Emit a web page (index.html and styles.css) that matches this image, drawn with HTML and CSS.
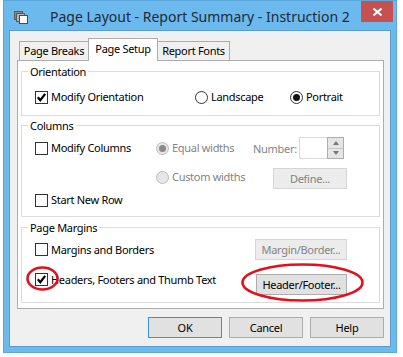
FILE: index.html
```html
<!DOCTYPE html>
<html>
<head>
<meta charset="utf-8">
<title>Page Layout</title>
<link rel="stylesheet" href="styles.css">
</head>
<body>
<div class="window">
  <div class="titlebar">
    <svg class="app-icon" viewBox="0 0 14 13" width="14" height="13">
      <rect x="0.5" y="0.5" width="8" height="8" fill="#8a8a8a" stroke="#5a5a5a"/>
      <rect x="2.5" y="2.5" width="8" height="8" fill="#b5b5b5" stroke="#5a5a5a"/>
      <rect x="5.5" y="4.5" width="8" height="8" fill="#ffffff" stroke="#4a4a4a"/>
    </svg>
    <div class="title">Page Layout - Report Summary - Instruction 2</div>
    <div class="close">
      <svg viewBox="0 0 9 8" width="9" height="8"><path d="M0.5 0.5 L8.5 7.5 M8.5 0.5 L0.5 7.5" stroke="#fff" stroke-width="2" fill="none"/></svg>
    </div>
  </div>
  <div class="client">
    <div class="tabs">
      <div class="tab tab-breaks">Page Breaks</div>
      <div class="tab tab-setup active">Page Setup</div>
      <div class="tab tab-fonts">Report Fonts</div>
    </div>
    <div class="panel">
      <div class="group g-orient">
        <div class="group-title">Orientation</div>
        <div class="row row-orient">
          <div class="check w-orient"><span class="box"><svg viewBox="0 0 11 11" width="11" height="11"><path d="M1.8 5.2 L4.3 8.2 L9.2 1.8" stroke="#000" stroke-width="2.2" fill="none"/></svg></span>Modify Orientation</div>
          <div class="radio w-land"><span class="ring"></span>Landscape</div>
          <div class="radio"><span class="ring on"><span class="dot"></span></span>Portrait</div>
        </div>
      </div>
      <div class="group g-cols">
        <div class="group-title">Columns</div>
        <div class="row row-c1">
          <div class="check w-col"><span class="box"></span>Modify Columns</div>
          <div class="radio disabled w-equal"><span class="ring on"><span class="dot"></span></span>Equal widths</div>
          <div class="label-dis w-num">Number:</div>
          <div class="spin">
            <div class="spin-field"></div>
            <div class="spin-btns">
              <div class="spin-btn"><span class="arr up"></span></div>
              <div class="spin-btn"><span class="arr down"></span></div>
            </div>
          </div>
        </div>
        <div class="row row-c2">
          <div class="radio disabled custom"><span class="ring"></span>Custom widths</div>
          <div class="btn btn-dis btn-define">Define...</div>
        </div>
        <div class="row row-c3">
          <div class="check"><span class="box"></span>Start New Row</div>
        </div>
      </div>
      <div class="group g-margins">
        <div class="group-title">Page Margins</div>
        <div class="row row-m1">
          <div class="check"><span class="box"></span>Margins and Borders</div>
          <div class="btn btn-dis btn-margin">Margin/Border...</div>
        </div>
        <div class="row row-m2">
          <div class="check check-tight"><span class="box"><svg viewBox="0 0 11 11" width="11" height="11"><path d="M1.8 5.2 L4.3 8.2 L9.2 1.8" stroke="#000" stroke-width="2.2" fill="none"/></svg></span>Headers, Footers and Thumb Text</div>
          <div class="btn btn-header">Header/Footer...</div>
        </div>
      </div>
    </div>
    <div class="buttons">
      <div class="btn btn-main btn-default">OK</div>
      <div class="btn btn-main">Cancel</div>
      <div class="btn btn-main">Help</div>
    </div>
  </div>
</div>
<svg class="annot" width="403" height="357" viewBox="0 0 403 357">
  <ellipse cx="42.5" cy="278.5" rx="15" ry="11" fill="none" stroke="#e3101b" stroke-width="2.6"/>
  <ellipse cx="302.5" cy="282.5" rx="60" ry="18" fill="none" stroke="#e3101b" stroke-width="2.6"/>
</svg>
</body>
</html>
```

FILE: styles.css
```css
* { box-sizing: border-box; }
html, body { margin: 0; padding: 0; }
body {
  background: #ffffff;
  width: 403px;
  height: 357px;
  overflow: hidden;
  position: relative;
  font-family: "Noto Sans", sans-serif;
  font-size: 11px;
  letter-spacing: -0.3px;
  color: #000;
}
.window {
  margin-left: 3px;
  width: 394px;
  height: 353px;
  background: #6cb9ee;
  border: 1px solid #5aa6dd;
  padding: 0 6px 6px;
  display: flex;
  flex-direction: column;
}
.titlebar {
  height: 30px;
  margin: 0 -6px;
  padding-left: 10px;
  display: flex;
  align-items: center;
  flex: none;
}
.app-icon { flex: none; display: block; margin-top: 2px; }
.title {
  margin-left: 22px;
  flex: 1;
  font-size: 14px;
  letter-spacing: 0;
  color: #1e2a36;
  white-space: nowrap;
}
.close {
  align-self: flex-start;
  width: 32px;
  height: 21px;
  margin-right: 3px;
  background: #c75050;
  display: flex;
  align-items: center;
  justify-content: center;
}
.close svg { display: block; }
.client {
  flex: 1;
  background: #f0f0f0;
  box-shadow: 0 0 0 1px #5b9bd0;
  padding: 0 6px 8px 7px;
  display: flex;
  flex-direction: column;
}
.tabs {
  height: 29px;
  flex: none;
  display: flex;
  align-items: flex-end;
  padding-left: 2px;
}
.tab {
  height: 19px;
  border: 1px solid #acacac;
  border-bottom: none;
  background: #f0f0f0;
  text-align: center;
  line-height: 17px;
  white-space: nowrap;
}
.tab-breaks { width: 70px; }
.tab-setup { width: 70px; margin-left: -1px; }
.tab-fonts { width: 73px; margin-left: -1px; }
.tab.active {
  height: 23px;
  margin-bottom: -1px;
  background: #ffffff;
  line-height: 19px;
  position: relative;
  z-index: 1;
}
.panel {
  width: 367px;
  height: 249px;
  flex: none;
  background: #fff;
  border: 1px solid #acacac;
  padding: 0 3px;
}
.group {
  border: 1px solid #dcdcdc;
}
.g-orient { margin-top: 10px; padding-bottom: 8px; }
.g-cols { margin-top: 9px; padding-bottom: 6px; }
.g-margins { margin-top: 10px; padding-bottom: 7px; }
.group-title {
  margin: -9px 0 0 6px;
  padding: 0 2px;
  width: max-content;
  background: #fff;
  line-height: 17px;
}
.row {
  display: flex;
  align-items: center;
  padding-left: 13px;
  padding-right: 32px;
}
.row-orient { margin-top: 7px; height: 20px; }
.row-c1 { margin-top: 3px; height: 22px; }
.row-c2 { margin-top: 9px; height: 21px; padding-left: 134px; align-items: flex-start; }
.row-c3 { margin-top: 1px; height: 20px; }
.row-m1 { margin-top: 3px; height: 21px; }
.row-m2 { margin-top: 13px; height: 22px; align-items: flex-start; }
.check, .radio {
  display: flex;
  align-items: center;
  line-height: 16px;
  white-space: nowrap;
}
.check-tight { line-height: 13px; }
.box {
  width: 13px;
  height: 13px;
  flex: none;
  border: 1px solid #333;
  background: #fff;
  margin-right: 3px;
}
.box svg { display: block; }
.ring {
  width: 13px;
  height: 13px;
  flex: none;
  border: 1px solid #333;
  border-radius: 50%;
  background: #fff;
  margin-right: 3px;
  display: flex;
  align-items: center;
  justify-content: center;
}
.dot {
  width: 7px;
  height: 7px;
  border-radius: 50%;
  background: #111;
}
.w-orient { width: 160px; }
.w-land { width: 95px; }
.w-col { width: 121px; }
.w-equal { width: 97px; }
.w-num { width: 46px; }
.disabled, .label-dis { color: #838383; }
.disabled .ring { border-color: #bcbcbc; background: #e6e6e6; }
.disabled .dot { background: #8a8a8a; }
.custom { margin-top: 1px; }
.spin {
  width: 45px;
  height: 22px;
  margin-right: 3px;
  border: 1px solid #d9d9d9;
  background: #fff;
  display: flex;
}
.spin-field { flex: 1; }
.spin-btns {
  width: 17px;
  display: flex;
  flex-direction: column;
  border: 1px solid #adadad;
  margin: -1px -1px -1px 0;
}
.spin-btn {
  flex: 1;
  background: #e6e6e6;
  display: flex;
  align-items: center;
  justify-content: center;
}
.spin-btn + .spin-btn { border-top: 1px solid #c8c8c8; }
.arr {
  width: 0;
  height: 0;
  border-left: 3.5px solid transparent;
  border-right: 3.5px solid transparent;
}
.arr.up { border-bottom: 4px solid #777; }
.arr.down { border-top: 4px solid #777; }
.btn {
  height: 21px;
  border: 1px solid #adadad;
  background: #e1e1e1;
  display: flex;
  align-items: center;
  justify-content: center;
  white-space: nowrap;
  flex: none;
}
.btn-dis {
  background: #ececec;
  border-color: #d5d5d5;
  color: #838383;
}
.btn-define { width: 74px; margin-left: auto; }
.btn-margin { width: 92px; margin-left: auto; }
.btn-header { width: 91px; margin-left: auto; margin-top: 1px; }
.buttons {
  margin-top: 8px;
  display: flex;
  justify-content: flex-end;
  gap: 7px;
}
.btn-main { width: 74px; }
.btn-default { border-color: #3c8ee0; }
.annot {
  position: absolute;
  left: 0;
  top: 0;
  pointer-events: none;
}
```
